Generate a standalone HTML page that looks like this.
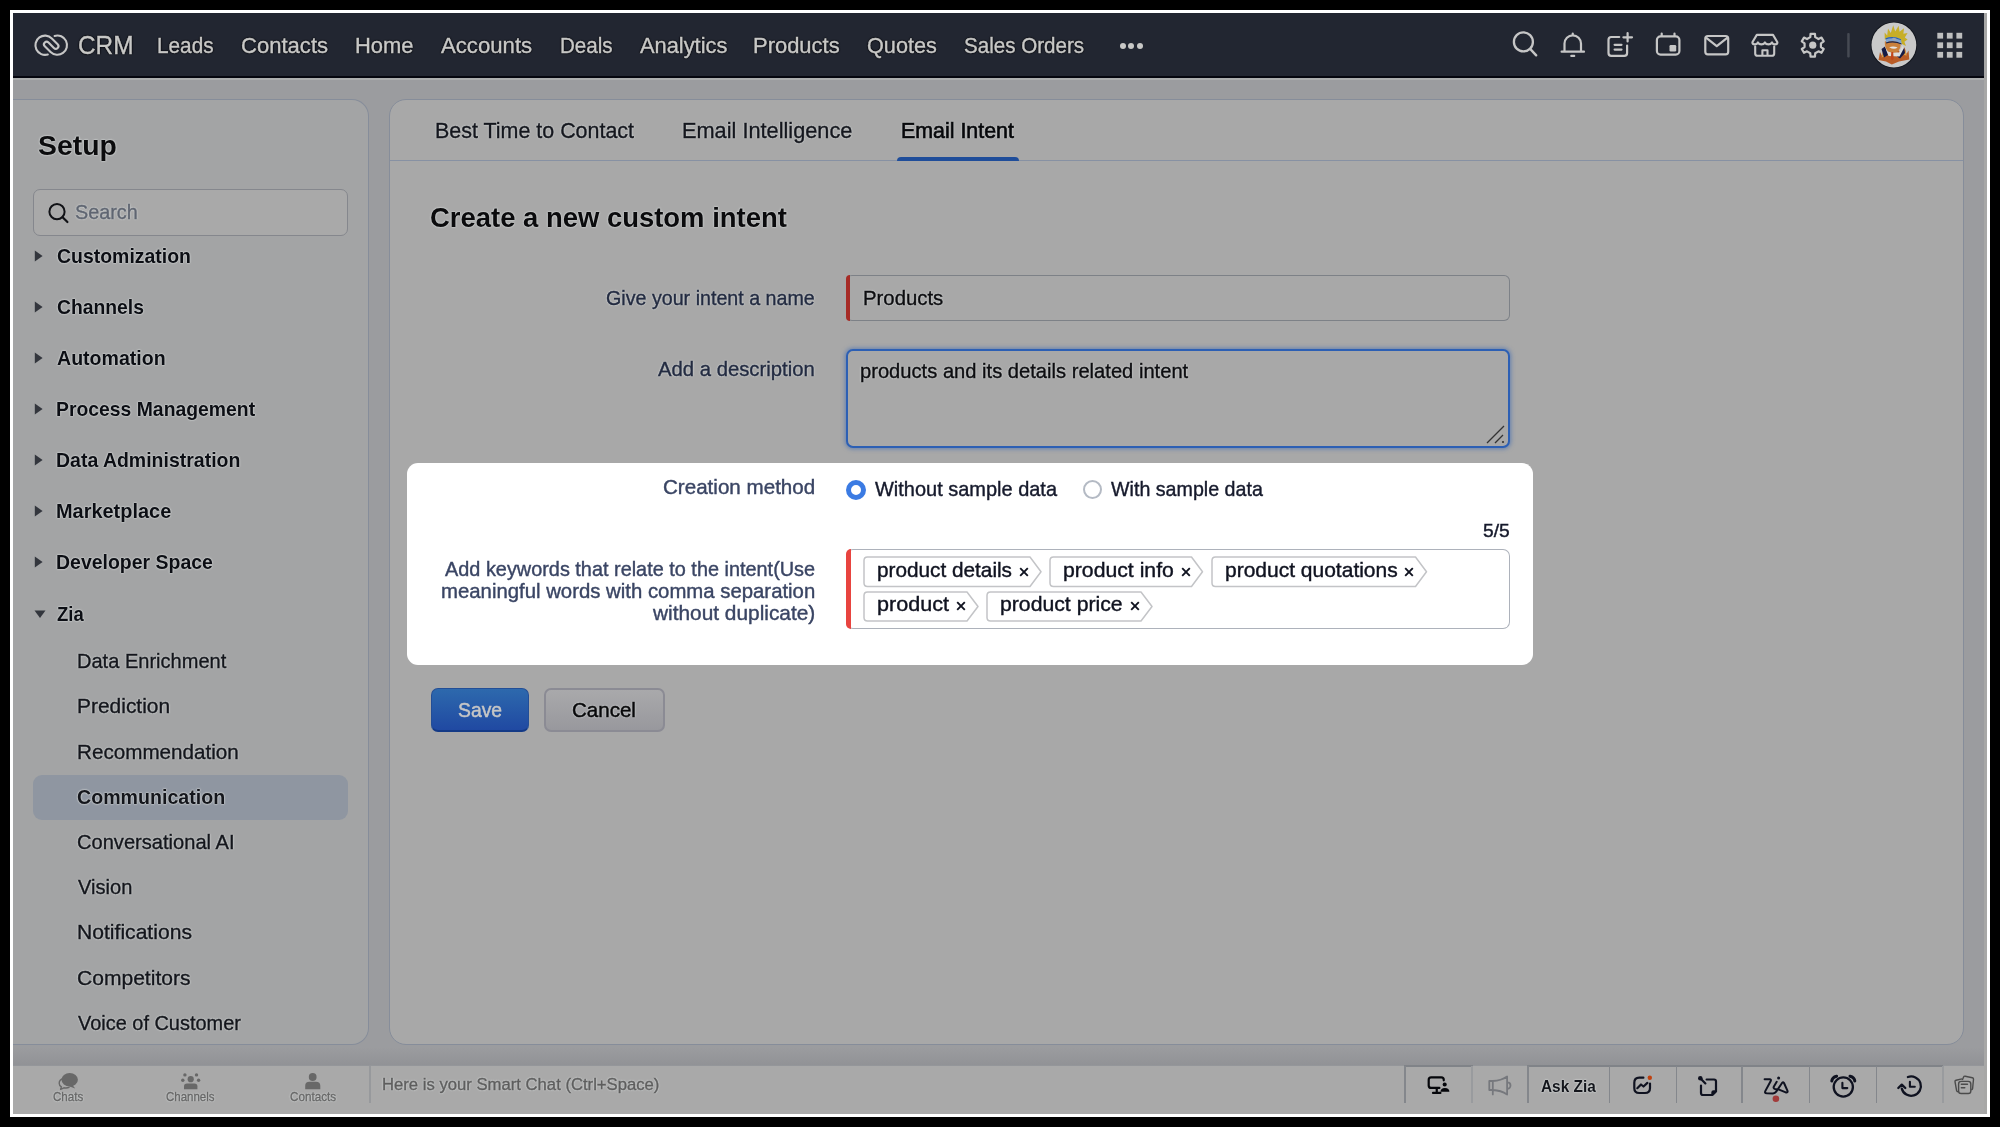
<!DOCTYPE html><html><head><meta charset="utf-8"><title>Zoho CRM - Email Intent</title><style>
html,body{margin:0;padding:0;}
body{width:2000px;height:1127px;background:#000;overflow:hidden;position:relative;font-family:"Liberation Sans",sans-serif;}
.a{position:absolute;box-sizing:border-box;}
.t{position:absolute;white-space:nowrap;line-height:1;transform-origin:0 0;display:block;}
svg{position:absolute;overflow:visible;}
</style></head><body>
<div class="a" style="left:10px;top:10px;width:1980px;height:1107px;background:#fff;"></div>
<div class="a" id="app" style="left:13px;top:13px;width:1974px;height:1101px;background:#9b9c9f;"></div>
<div class="a" style="left:1984px;top:13px;width:3px;height:1101px;background:#a7a7a6;"></div>
<nav class="a" style="left:13px;top:13px;width:1971px;height:65px;background:#222631;"></nav>
<div class="a" style="left:13px;top:76.4px;width:1971px;height:1.6px;background:#05060e;"></div>
<div class="a" style="left:13px;top:78px;width:1971px;height:2px;background:#acaeae;"></div>
<div class="a" style="left:1119.6px;top:43.4px;width:6px;height:6px;border-radius:50%;background:#c8c8c6;"></div>
<div class="a" style="left:1128.3px;top:43.4px;width:6px;height:6px;border-radius:50%;background:#c8c8c6;"></div>
<div class="a" style="left:1136.9px;top:43.4px;width:6px;height:6px;border-radius:50%;background:#c8c8c6;"></div>
<aside class="a" style="left:13px;top:98.5px;width:356px;height:946.5px;background:#a3a4a5;border:1.7px solid #868d9a;border-left:none;border-radius:0 17px 17px 0;"></aside>
<div class="a" style="left:33px;top:189px;width:314.5px;height:46.5px;border:1.5px solid #85878d;border-radius:7px;background:#a9a9a9;"></div>
<svg style="left:45px;top:200px" width="26" height="26" viewBox="0 0 26 26"><circle cx="12" cy="11.7" r="7.6" fill="none" stroke="#111216" stroke-width="2"/><path d="M17.6 17.2 L22.4 22" stroke="#111216" stroke-width="2.2" stroke-linecap="round"/></svg>
<svg style="left:33px;top:249.2px" width="12" height="14" viewBox="0 0 12 14"><path d="M1.8 1.6 L9.6 7 L1.8 12.4 Z" fill="#33363d"/></svg>
<svg style="left:33px;top:300.2px" width="12" height="14" viewBox="0 0 12 14"><path d="M1.8 1.6 L9.6 7 L1.8 12.4 Z" fill="#33363d"/></svg>
<svg style="left:33px;top:351.2px" width="12" height="14" viewBox="0 0 12 14"><path d="M1.8 1.6 L9.6 7 L1.8 12.4 Z" fill="#33363d"/></svg>
<svg style="left:33px;top:402.2px" width="12" height="14" viewBox="0 0 12 14"><path d="M1.8 1.6 L9.6 7 L1.8 12.4 Z" fill="#33363d"/></svg>
<svg style="left:33px;top:453.2px" width="12" height="14" viewBox="0 0 12 14"><path d="M1.8 1.6 L9.6 7 L1.8 12.4 Z" fill="#33363d"/></svg>
<svg style="left:33px;top:504.19999999999993px" width="12" height="14" viewBox="0 0 12 14"><path d="M1.8 1.6 L9.6 7 L1.8 12.4 Z" fill="#33363d"/></svg>
<svg style="left:33px;top:555.1999999999999px" width="12" height="14" viewBox="0 0 12 14"><path d="M1.8 1.6 L9.6 7 L1.8 12.4 Z" fill="#33363d"/></svg>
<svg style="left:33px;top:607.5999999999999px" width="14" height="12" viewBox="0 0 14 12"><path d="M1.5 2.5 L12.5 2.5 L7 10 Z" fill="#33363d"/></svg>
<div class="a" style="left:33px;top:774.5px;width:314.5px;height:45px;border-radius:9px;background:#8f96a1;"></div>
<main class="a" style="left:389px;top:98.5px;width:1575px;height:946.5px;background:#a8a8a8;border:1.7px solid #868d9a;border-radius:17px;"></main>
<div class="a" style="left:390px;top:159.6px;width:1573px;height:1.6px;background:#8791a3;"></div>
<div class="a" style="left:897.3px;top:156.6px;width:121.7px;height:4.6px;background:#1f4d9a;border-radius:5px 5px 0 0;"></div>
<div class="a" style="left:846px;top:275px;width:664px;height:45.5px;border:1.5px solid #7d8187;border-left:none;border-radius:6px;background:#a8a8a8;"></div>
<div class="a" style="left:845.9px;top:275px;width:4.5px;height:45.5px;background:#a62b26;border-radius:6px 0 0 6px;"></div>
<div class="a" style="left:846px;top:348.5px;width:664px;height:99.5px;border:2px solid #2c5fb4;border-radius:7px;background:#a8a8a8;box-shadow:0 0 4px 1px rgba(44,95,180,.55);"></div>
<svg style="left:1484px;top:424px" width="22" height="20" viewBox="0 0 22 20"><path d="M3 19 L20 2 M11 19 L19 11" stroke="#333" stroke-width="1.3" fill="none"/><circle cx="19" cy="18" r="1.1" fill="#333"/></svg>
<section class="a" style="left:406.5px;top:463px;width:1126px;height:201.5px;background:#fff;border-radius:11px;"></section>
<div class="a" style="left:846.2px;top:479.6px;width:20px;height:20px;border-radius:50%;border:5.5px solid #3b7be3;background:#fff;"></div>
<div class="a" style="left:1083px;top:480.2px;width:19px;height:19px;border-radius:50%;border:2px solid #b4bac4;background:#fff;"></div>
<div class="a" style="left:846px;top:548.5px;width:664px;height:80.5px;border:1.5px solid #adb2bb;border-left:none;border-radius:7px;background:#fff;"></div>
<div class="a" style="left:846px;top:548.5px;width:5px;height:80.5px;background:#e8443f;border-radius:7px 0 0 7px;"></div>
<svg style="left:863px;top:556px" width="181" height="31.5" viewBox="-1 -1 181 31.5"><path d="M3.5 0 H166 L177 14.75 L166 29.5 H3.5 Q0 29.5 0 26.0 V3.5 Q0 0 3.5 0 Z" fill="#fff" stroke="#c3c4c7" stroke-width="1.5" stroke-linejoin="round"/></svg>
<svg style="left:1018.8px;top:567.0px" width="10" height="10" viewBox="0 0 10 10"><path d="M1.2 1.2 L8.8 8.8 M8.8 1.2 L1.2 8.8" stroke="#101320" stroke-width="1.9" fill="none"/></svg>
<svg style="left:1049px;top:556px" width="156.5" height="31.5" viewBox="-1 -1 156.5 31.5"><path d="M3.5 0 H141.5 L152.5 14.75 L141.5 29.5 H3.5 Q0 29.5 0 26.0 V3.5 Q0 0 3.5 0 Z" fill="#fff" stroke="#c3c4c7" stroke-width="1.5" stroke-linejoin="round"/></svg>
<svg style="left:1180.7px;top:567.0px" width="10" height="10" viewBox="0 0 10 10"><path d="M1.2 1.2 L8.8 8.8 M8.8 1.2 L1.2 8.8" stroke="#101320" stroke-width="1.9" fill="none"/></svg>
<svg style="left:1211px;top:556px" width="218.5" height="31.5" viewBox="-1 -1 218.5 31.5"><path d="M3.5 0 H203.5 L214.5 14.75 L203.5 29.5 H3.5 Q0 29.5 0 26.0 V3.5 Q0 0 3.5 0 Z" fill="#fff" stroke="#c3c4c7" stroke-width="1.5" stroke-linejoin="round"/></svg>
<svg style="left:1404.3px;top:567.0px" width="10" height="10" viewBox="0 0 10 10"><path d="M1.2 1.2 L8.8 8.8 M8.8 1.2 L1.2 8.8" stroke="#101320" stroke-width="1.9" fill="none"/></svg>
<svg style="left:863px;top:590.5px" width="118" height="31.0" viewBox="-1 -1 118 31.0"><path d="M3.5 0 H103 L114 14.5 L103 29.0 H3.5 Q0 29.0 0 25.5 V3.5 Q0 0 3.5 0 Z" fill="#fff" stroke="#c3c4c7" stroke-width="1.5" stroke-linejoin="round"/></svg>
<svg style="left:956.1px;top:601.4000000000001px" width="10" height="10" viewBox="0 0 10 10"><path d="M1.2 1.2 L8.8 8.8 M8.8 1.2 L1.2 8.8" stroke="#101320" stroke-width="1.9" fill="none"/></svg>
<svg style="left:986px;top:590.5px" width="169" height="31.0" viewBox="-1 -1 169 31.0"><path d="M3.5 0 H154 L165 14.5 L154 29.0 H3.5 Q0 29.0 0 25.5 V3.5 Q0 0 3.5 0 Z" fill="#fff" stroke="#c3c4c7" stroke-width="1.5" stroke-linejoin="round"/></svg>
<svg style="left:1130.1px;top:601.4000000000001px" width="10" height="10" viewBox="0 0 10 10"><path d="M1.2 1.2 L8.8 8.8 M8.8 1.2 L1.2 8.8" stroke="#101320" stroke-width="1.9" fill="none"/></svg>
<div class="a" style="left:431px;top:688px;width:98px;height:43.6px;border-radius:7px;background:linear-gradient(#2d69ad,#2049a2);border:1px solid #234e96;border-bottom:2.5px solid #143a86;"></div>
<div class="a" style="left:543.6px;top:688px;width:121px;height:43.6px;border-radius:7px;background:linear-gradient(#a9a9ab,#98989d);border:2px solid #8b8b94;"></div>
<div class="a" style="left:13px;top:1047px;width:1971px;height:18px;background:linear-gradient(rgba(0,0,0,0),rgba(20,22,30,.07));"></div>
<footer class="a" style="left:13px;top:1065px;width:1971px;height:49px;background:#a9a9a9;border-top:1.5px solid #94969a;"></footer><div class="a" style="left:1404px;top:1065.3px;width:68.8px;height:1.7px;background:#808388;"></div><div class="a" style="left:1527.2px;top:1065.3px;width:416px;height:1.7px;background:#808388;"></div>
<svg style="left:0;top:0" width="2000" height="1127" viewBox="0 0 2000 1127" fill="none" ><path d="M47.80 54.50 A9.65 9.65 0 1 1 51.82 38.38 L57.64 44.14 A2.65 2.65 0 0 1 53.89 47.89 L48.51 42.51 A2.65 2.65 0 0 0 44.76 46.26 L50.58 52.02 A9.65 9.65 0 1 0 54.60 35.90" stroke="#c6c6c6" stroke-width="2.1" stroke-linecap="round" stroke-linejoin="round"/><circle cx="1523.4" cy="41.9" r="9.5" stroke="#c6c6c6" stroke-width="2.3"/><path d="M1530.4 49.2 L1536.2 55.3" stroke="#c6c6c6" stroke-width="2.4" stroke-linecap="round"/><path d="M1564.5 51.7 V43.6 A8.25 8.25 0 0 1 1581 43.6 V51.7 M1561.6 51.7 H1584 M1572.75 33.5 V35.3 M1571.3 55.9 H1574.2" stroke="#c6c6c6" stroke-width="2.2" stroke-linecap="round"/><path d="M1619.2 37 H1611.3 Q1608.5 37 1608.5 39.8 V53 Q1608.5 55.8 1611.3 55.8 H1624.3 Q1627.1 55.8 1627.1 53 V45.6 M1614.6 44.8 H1621.5 M1614.6 49.6 H1621.5 M1623.4 37.3 H1632 M1627.6 33 V41.5" stroke="#c6c6c6" stroke-width="2.2" stroke-linecap="round"/><rect x="1656.9" y="36.4" width="22.5" height="18.2" rx="3.6" stroke="#c6c6c6" stroke-width="2.2"/><path d="M1661.7 33.6 V36 M1674.5 33.6 V36" stroke="#c6c6c6" stroke-width="2.2" stroke-linecap="round"/><rect x="1669.5" y="45" width="6.7" height="6.5" rx="1.2" fill="#c6c6c6"/><rect x="1705.3" y="36" width="22.9" height="18.3" rx="2.6" stroke="#c6c6c6" stroke-width="2.2"/><path d="M1706 37.6 L1716.75 46.2 L1727.5 37.6" stroke="#c6c6c6" stroke-width="2.2" stroke-linejoin="round"/><path d="M1756.8 34.9 H1773 L1777.4 42.2 Q1777.4 44.4 1775 44.4 Q1772.6 44.4 1771.9 42.4 Q1770.8 44.4 1768.4 44.4 Q1766 44.4 1764.9 42.4 Q1763.8 44.4 1761.4 44.4 Q1759 44.4 1757.9 42.4 Q1757.2 44.4 1754.8 44.4 Q1752.4 44.4 1752.4 42.2 Z" stroke="#c6c6c6" stroke-width="2.1" stroke-linejoin="round"/><path d="M1755.2 46.5 V53.4 Q1755.2 55.8 1757.6 55.8 H1771.8 Q1774.2 55.8 1774.2 53.4 V46.5 M1762.4 55.5 V50.2 H1767.5 V55.5" stroke="#c6c6c6" stroke-width="2.1" stroke-linecap="round" stroke-linejoin="round"/><path d="M1815.21 37.17 L1814.96 33.81 L1810.54 33.81 L1810.29 37.17 L1807.02 39.06 L1804.00 37.59 L1801.78 41.42 L1804.57 43.31 L1804.57 47.09 L1801.78 48.98 L1804.00 52.81 L1807.02 51.34 L1810.29 53.23 L1810.54 56.59 L1814.96 56.59 L1815.21 53.23 L1818.48 51.34 L1821.50 52.81 L1823.72 48.98 L1820.93 47.09 L1820.93 43.31 L1823.72 41.42 L1821.50 37.59 L1818.48 39.06 Z" stroke="#c6c6c6" stroke-width="2.2" stroke-linejoin="round"/><circle cx="1812.75" cy="45.2" r="3.6" fill="#c6c6c6"/><rect x="1847.2" y="33" width="2.5" height="24.5" rx="1" fill="#464a53"/><rect x="1937.3" y="32.8" width="5.8" height="5.8" fill="#bebebe"/><rect x="1937.3" y="42.35" width="5.8" height="5.8" fill="#bebebe"/><rect x="1937.3" y="51.9" width="5.8" height="5.8" fill="#bebebe"/><rect x="1946.85" y="32.8" width="5.8" height="5.8" fill="#bebebe"/><rect x="1946.85" y="42.35" width="5.8" height="5.8" fill="#bebebe"/><rect x="1946.85" y="51.9" width="5.8" height="5.8" fill="#bebebe"/><rect x="1956.4" y="32.8" width="5.8" height="5.8" fill="#bebebe"/><rect x="1956.4" y="42.35" width="5.8" height="5.8" fill="#bebebe"/><rect x="1956.4" y="51.9" width="5.8" height="5.8" fill="#bebebe"/></svg>
<svg style="left:0;top:0" width="2000" height="1127" viewBox="0 0 2000 1127" fill="none" ><defs><clipPath id="avc"><circle cx="1893.9" cy="45" r="22.4"/></clipPath></defs><circle cx="1893.9" cy="45" r="23.299999999999997" fill="#11141c"/><circle cx="1893.9" cy="45" r="22.4" fill="#c9c9c9"/><g clip-path="url(#avc)"><path d="M1878.5 60 L1880 52 L1882 56 L1883.5 48.5 L1886 54 L1890 50 L1898 50 L1902.5 54 L1904.5 47 L1906.5 54 L1908.5 50.5 L1909.3 59.5 L1899 61.5 L1891.8 64.4 L1886 61.5 Z" fill="#b95c26"/><path d="M1881.5 57.5 L1883.5 51 L1885.5 56 Z M1904 55 L1905 49.5 L1906.8 55.5 Z" fill="#d9a24a"/><path d="M1881.5 49 L1885 46.5 L1888 55 L1884 57.5 Z M1897 56.5 L1901.5 50 L1904 47.5 L1905 53 L1900 58.5 Z" fill="#161b45"/><path d="M1885 46 L1888 44 L1890 52 L1899 52.5 L1902.5 46 L1904 48 L1899.5 56.5 L1888.5 56 Z" fill="#dcdcdc"/><path d="M1884.8 41.5 Q1892 38.5 1900.5 43.8 Q1901.3 49 1897 52 Q1892 53.5 1888 51.5 Q1884.3 47.5 1884.8 41.5 Z" fill="#c9803c"/><path d="M1889.2 47.2 Q1893.5 45.6 1897.6 47.6 Q1894 50.2 1889.2 47.2 Z" fill="#e6e6e6"/><path d="M1891.3 52 L1893.2 52 L1893.6 59 L1892 60.5 L1890.8 58.5 Z" fill="#c2451a"/><path d="M1884.8 39.5 L1884.6 32.5 L1887.2 35.5 L1888 28.5 L1890.8 33 L1893.2 25.3 L1895.2 31.5 L1898.6 25.8 L1899.6 31.8 L1904 28.2 L1903.4 33.8 L1907.6 33 L1904.8 37.6 L1907.6 39.4 L1904.4 41.8 L1906 46 L1902 44 L1900 40 L1892 37.5 Z" fill="#c7ae27"/><path d="M1885.6 38.2 Q1893 35.2 1901 39.2 L1901.6 43.6 Q1893.5 39.6 1886 42.6 Z" fill="#7fa3cf"/><path d="M1885.6 38.2 Q1893 35.2 1901 39.2 L1901.1 40.2 Q1893 36.6 1885.7 39.4 Z" fill="#2d5fae"/><path d="M1886 42.6 Q1893.5 39.6 1901.6 43.6 L1901.7 44.6 Q1893.5 40.8 1886.1 43.6 Z" fill="#1a2247"/><ellipse cx="1894.3" cy="39.2" rx="2.2" ry="1.3" fill="#9aa6b8" transform="rotate(8 1894.3 39.2)"/></g></svg><svg style="left:0;top:0" width="2000" height="1127" viewBox="0 0 2000 1127" fill="none"><path d="M63.5 1078.5 Q59.2 1079.5 59.2 1083.2 Q59.2 1085.6 61.4 1086.9 L60.6 1089.3 L63.9 1087.8 Q67 1088.4 69.5 1087.2" stroke="#686868" stroke-width="1.4" stroke-linejoin="round"/><ellipse cx="69.7" cy="1079.8" rx="8.2" ry="6.7" fill="#686868"/><path d="M72.5 1085 L75.2 1088.6 L69 1086.3 Z" fill="#686868"/><circle cx="190.7" cy="1079.2" r="3.1" fill="#686868"/><path d="M184 1089.2 V1086.2 Q184 1083.4 187 1083.4 H194.4 Q197.4 1083.4 197.4 1086.2 V1089.2 Z" fill="#686868"/><circle cx="184.9" cy="1074.9" r="1.7" fill="#686868"/><circle cx="196.5" cy="1074.9" r="1.7" fill="#686868"/><circle cx="182.8" cy="1080.2" r="1.7" fill="#686868"/><circle cx="198.6" cy="1080.2" r="1.7" fill="#686868"/><circle cx="312.7" cy="1077" r="3.9" fill="#686868"/><path d="M305.2 1089.2 V1086 Q305.2 1081.8 309.4 1081.8 H316 Q320.3 1081.8 320.3 1086 V1089.2 Z" fill="#686868"/></svg>
<svg style="left:0;top:0" width="2000" height="1127" viewBox="0 0 2000 1127" fill="none"><path d="M1443.75 1080.3 V1079.8 Q1443.75 1077.3 1441.25 1077.3 H1431.2 Q1428.7 1077.3 1428.7 1079.8 V1085.4 Q1428.7 1087.9 1431.2 1087.9 H1439.4 M1436.75 1088 V1092.6 M1433 1092.9 H1440.4" stroke="#05060a" stroke-width="2.2" stroke-linecap="round"/><circle cx="1444.7" cy="1084.5" r="2.05" fill="#05060a"/><path d="M1440.5 1091.8 Q1440.5 1087.9 1444.9 1087.9 Q1449.4 1087.9 1449.4 1091.8 Z" fill="#05060a"/><path d="M1489.3 1081 H1492.8 V1090 H1489.3 Z M1492.8 1081 Q1501 1080.6 1507.1 1076.4 V1094.5 Q1501 1090.4 1492.8 1090 M1492.8 1090 V1094.4 M1507.3 1082.3 A3.2 3.2 0 0 1 1507.3 1088.7" stroke="#76787d" stroke-width="1.8" stroke-linejoin="round" stroke-linecap="round"/><path d="M1643.4 1077.7 H1639.3 Q1634.3 1077.7 1634.3 1082.7 V1088 Q1634.3 1093 1639.3 1093 H1645 Q1650 1093 1650 1088 V1083.6 M1637.3 1088.2 L1641 1084.5 L1643.5 1086.5 L1647.4 1082.9" stroke="#0f1220" stroke-width="2.2" stroke-linecap="round" stroke-linejoin="round"/><circle cx="1649.8" cy="1077.8" r="2.2" fill="#c0410f"/><circle cx="1700.3" cy="1078.2" r="2.3" fill="#0f1220"/><path d="M1700.3 1078.2 L1705.4 1083.4 M1706.6 1079.5 H1714 Q1716 1079.5 1716 1081.5 V1091.4 L1712.4 1095 H1703 Q1701 1095 1701 1093 V1085.6 M1716 1091.4 H1713.6 Q1712.4 1091.4 1712.4 1092.6 V1095" stroke="#0f1220" stroke-width="2.2" stroke-linecap="round" stroke-linejoin="round"/><path d="M1764.6 1079.3 H1769.6 Q1771.6 1079.3 1770.6 1081.2 L1765.4 1090.9 Q1764.2 1093.2 1766.8 1093.3 L1773 1093.4 Q1775 1093.3 1776.2 1091.6 L1782.2 1082.8 Q1783.2 1081.4 1784 1083 L1787.4 1090.6 Q1788.2 1092.9 1785.8 1092.4 L1778.4 1089.3 M1776.7 1081.8 L1773.9 1086.4 Q1773 1088.2 1774.8 1088.9 L1777.4 1089.4" stroke="#0f1220" stroke-width="2" stroke-linecap="round" stroke-linejoin="round"/><circle cx="1778.6" cy="1078" r="1.5" fill="#0f1220"/><circle cx="1775.9" cy="1098.8" r="3.3" fill="#a23b3a"/><circle cx="1843.3" cy="1087" r="9.6" stroke="#0f1220" stroke-width="2.3"/><path d="M1842.4 1082.7 V1088.1 H1847.3" stroke="#0f1220" stroke-width="2.1" stroke-linecap="round" stroke-linejoin="round"/><path d="M1836.6 1076.2 Q1832.2 1077.2 1831.8 1081" stroke="#0f1220" stroke-width="3" stroke-linecap="round"/><path d="M1850 1076.2 Q1854.4 1077.2 1854.8 1081" stroke="#0f1220" stroke-width="3" stroke-linecap="round"/><path d="M1907.9 1077 A9.7 9.7 0 1 1 1901.8 1088.6" stroke="#0f1220" stroke-width="2.3" stroke-linecap="round"/><path d="M1898.3 1088 L1901.8 1084.6 L1905.3 1088" stroke="#0f1220" stroke-width="2.3" stroke-linecap="round" stroke-linejoin="round"/><path d="M1909.9 1081.8 V1086.8 H1914.8" stroke="#0f1220" stroke-width="2.1" stroke-linecap="round" stroke-linejoin="round"/><g stroke="#4b4b4b" stroke-width="1.4" stroke-linejoin="round"><path d="M1962 1078.9 L1956 1080.2 Q1954.8 1080.5 1955 1081.7 L1956.6 1090.6 Q1956.9 1091.8 1958.2 1091.7" /><path d="M1962.3 1080 L1963.6 1076.9 Q1964 1076 1965.2 1076.2 L1972.4 1077.7 Q1973.6 1078 1973.5 1079.2 L1972.6 1088.5 Q1972.4 1089.6 1971.2 1089.8"/><rect x="1958.6" y="1081.4" width="12.2" height="12.1" rx="2.6" fill="#a9a9a9"/><path d="M1961.3 1084.2 H1967.5 M1961.3 1087.8 H1964.8" stroke-linecap="round"/></g></svg>
<div class="a" style="left:369px;top:1066px;width:1.5px;height:37px;background:#97999c;"></div>
<div class="a" style="left:1404.0px;top:1066px;width:1.6px;height:37.3px;background:#84878c;"></div>
<div class="a" style="left:1471.2px;top:1066px;width:1.6px;height:37.3px;background:#999b9e;"></div>
<div class="a" style="left:1527.2px;top:1066px;width:1.6px;height:37.3px;background:#84878c;"></div>
<div class="a" style="left:1608.5px;top:1066px;width:1.6px;height:37.3px;background:#84878c;"></div>
<div class="a" style="left:1675.7px;top:1066px;width:1.6px;height:37.3px;background:#84878c;"></div>
<div class="a" style="left:1741.2px;top:1066px;width:1.6px;height:37.3px;background:#84878c;"></div>
<div class="a" style="left:1808.5px;top:1066px;width:1.6px;height:37.3px;background:#84878c;"></div>
<div class="a" style="left:1875.7px;top:1066px;width:1.6px;height:37.3px;background:#84878c;"></div>
<div class="a" style="left:1942.4px;top:1066px;width:1.6px;height:37.3px;background:#999b9e;"></div>
<div id="txt" class="a" style="left:0;top:0;width:2000px;height:1127px;will-change:transform;">
<span class="t" style="left:77.88px;top:33.00px;font-size:25.5px;color:#c8c8c6;transform:scaleX(0.9566);-webkit-text-stroke:0.4px #c8c8c6;text-shadow:0 0 2px rgba(2,3,10,1),0 0 2px rgba(2,3,10,1),0 0 1.2px rgba(2,3,10,.9);">CRM</span>
<span class="t" style="left:157.06px;top:35.00px;font-size:22.3px;color:#c8c8c6;transform:scaleX(0.9314);-webkit-text-stroke:0.4px #c8c8c6;text-shadow:0 0 2px rgba(2,3,10,1),0 0 2px rgba(2,3,10,1),0 0 1.2px rgba(2,3,10,.9);">Leads</span>
<span class="t" style="left:241.22px;top:35.00px;font-size:22.3px;color:#c8c8c6;transform:scaleX(0.9893);-webkit-text-stroke:0.4px #c8c8c6;text-shadow:0 0 2px rgba(2,3,10,1),0 0 2px rgba(2,3,10,1),0 0 1.2px rgba(2,3,10,.9);">Contacts</span>
<span class="t" style="left:355.05px;top:35.00px;font-size:22.3px;color:#c8c8c6;transform:scaleX(0.9841);-webkit-text-stroke:0.4px #c8c8c6;text-shadow:0 0 2px rgba(2,3,10,1),0 0 2px rgba(2,3,10,1),0 0 1.2px rgba(2,3,10,.9);">Home</span>
<span class="t" style="left:441.21px;top:35.00px;font-size:22.3px;color:#c8c8c6;transform:scaleX(0.9935);-webkit-text-stroke:0.4px #c8c8c6;text-shadow:0 0 2px rgba(2,3,10,1),0 0 2px rgba(2,3,10,1),0 0 1.2px rgba(2,3,10,.9);">Accounts</span>
<span class="t" style="left:559.60px;top:35.00px;font-size:22.3px;color:#c8c8c6;transform:scaleX(0.9236);-webkit-text-stroke:0.4px #c8c8c6;text-shadow:0 0 2px rgba(2,3,10,1),0 0 2px rgba(2,3,10,1),0 0 1.2px rgba(2,3,10,.9);">Deals</span>
<span class="t" style="left:639.60px;top:35.00px;font-size:22.3px;color:#c8c8c6;transform:scaleX(0.9788);-webkit-text-stroke:0.4px #c8c8c6;text-shadow:0 0 2px rgba(2,3,10,1),0 0 2px rgba(2,3,10,1),0 0 1.2px rgba(2,3,10,.9);">Analytics</span>
<span class="t" style="left:753.03px;top:35.00px;font-size:22.3px;color:#c8c8c6;transform:scaleX(0.9843);-webkit-text-stroke:0.4px #c8c8c6;text-shadow:0 0 2px rgba(2,3,10,1),0 0 2px rgba(2,3,10,1),0 0 1.2px rgba(2,3,10,.9);">Products</span>
<span class="t" style="left:866.65px;top:35.00px;font-size:22.3px;color:#c8c8c6;transform:scaleX(0.9712);-webkit-text-stroke:0.4px #c8c8c6;text-shadow:0 0 2px rgba(2,3,10,1),0 0 2px rgba(2,3,10,1),0 0 1.2px rgba(2,3,10,.9);">Quotes</span>
<span class="t" style="left:964.34px;top:35.00px;font-size:22.3px;color:#c8c8c6;transform:scaleX(0.9230);-webkit-text-stroke:0.4px #c8c8c6;text-shadow:0 0 2px rgba(2,3,10,1),0 0 2px rgba(2,3,10,1),0 0 1.2px rgba(2,3,10,.9);">Sales Orders</span>
<span class="t" style="left:38.17px;top:132.00px;font-size:28px;color:#0c0c0e;transform:scaleX(1.0129);font-weight:bold;text-shadow:0 0 2px rgba(206,209,209,1),0 0 2px rgba(206,209,209,1),0 0 1.2px rgba(206,209,209,.9);">Setup</span>
<span class="t" style="left:74.61px;top:202.00px;font-size:20.6px;color:#5f6571;transform:scaleX(0.9625);-webkit-text-stroke:0.4px #5f6571;text-shadow:0 0 2px rgba(206,209,209,1),0 0 2px rgba(206,209,209,1),0 0 1.2px rgba(206,209,209,.9);">Search</span>
<span class="t" style="left:56.77px;top:245.00px;font-size:21px;color:#0c0e14;transform:scaleX(0.9261);font-weight:bold;text-shadow:0 0 2px rgba(206,209,209,1),0 0 2px rgba(206,209,209,1),0 0 1.2px rgba(206,209,209,.9);">Customization</span>
<span class="t" style="left:56.78px;top:296.00px;font-size:21px;color:#0c0e14;transform:scaleX(0.9201);font-weight:bold;text-shadow:0 0 2px rgba(206,209,209,1),0 0 2px rgba(206,209,209,1),0 0 1.2px rgba(206,209,209,.9);">Channels</span>
<span class="t" style="left:57.01px;top:347.00px;font-size:21px;color:#0c0e14;transform:scaleX(0.9317);font-weight:bold;text-shadow:0 0 2px rgba(206,209,209,1),0 0 2px rgba(206,209,209,1),0 0 1.2px rgba(206,209,209,.9);">Automation</span>
<span class="t" style="left:56.17px;top:398.00px;font-size:21px;color:#0c0e14;transform:scaleX(0.9220);font-weight:bold;text-shadow:0 0 2px rgba(206,209,209,1),0 0 2px rgba(206,209,209,1),0 0 1.2px rgba(206,209,209,.9);">Process Management</span>
<span class="t" style="left:56.16px;top:449.00px;font-size:21px;color:#0c0e14;transform:scaleX(0.9275);font-weight:bold;text-shadow:0 0 2px rgba(206,209,209,1),0 0 2px rgba(206,209,209,1),0 0 1.2px rgba(206,209,209,.9);">Data Administration</span>
<span class="t" style="left:56.13px;top:500.00px;font-size:21px;color:#0c0e14;transform:scaleX(0.9492);font-weight:bold;text-shadow:0 0 2px rgba(206,209,209,1),0 0 2px rgba(206,209,209,1),0 0 1.2px rgba(206,209,209,.9);">Marketplace</span>
<span class="t" style="left:56.16px;top:551.00px;font-size:21px;color:#0c0e14;transform:scaleX(0.9270);font-weight:bold;text-shadow:0 0 2px rgba(206,209,209,1),0 0 2px rgba(206,209,209,1),0 0 1.2px rgba(206,209,209,.9);">Developer Space</span>
<span class="t" style="left:56.92px;top:603.00px;font-size:21px;color:#0c0e14;transform:scaleX(0.8811);font-weight:bold;text-shadow:0 0 2px rgba(206,209,209,1),0 0 2px rgba(206,209,209,1),0 0 1.2px rgba(206,209,209,.9);">Zia</span>
<span class="t" style="left:76.62px;top:651.00px;font-size:20.6px;color:#14161c;transform:scaleX(0.9731);-webkit-text-stroke:0.4px #14161c;text-shadow:0 0 2px rgba(206,209,209,1),0 0 2px rgba(206,209,209,1),0 0 1.2px rgba(206,209,209,.9);">Data Enrichment</span>
<span class="t" style="left:76.96px;top:696.00px;font-size:20.6px;color:#14161c;transform:scaleX(1.0169);-webkit-text-stroke:0.4px #14161c;text-shadow:0 0 2px rgba(206,209,209,1),0 0 2px rgba(206,209,209,1),0 0 1.2px rgba(206,209,209,.9);">Prediction</span>
<span class="t" style="left:76.57px;top:742.00px;font-size:20.6px;color:#14161c;transform:scaleX(1.0026);-webkit-text-stroke:0.4px #14161c;text-shadow:0 0 2px rgba(206,209,209,1),0 0 2px rgba(206,209,209,1),0 0 1.2px rgba(206,209,209,.9);">Recommendation</span>
<span class="t" style="left:77.16px;top:787.00px;font-size:20.6px;color:#14161c;transform:scaleX(0.9522);font-weight:bold;text-shadow:0 0 2px rgba(206,209,209,1),0 0 2px rgba(206,209,209,1),0 0 1.2px rgba(206,209,209,.9);">Communication</span>
<span class="t" style="left:77.09px;top:832.00px;font-size:20.6px;color:#14161c;transform:scaleX(0.9756);-webkit-text-stroke:0.4px #14161c;text-shadow:0 0 2px rgba(206,209,209,1),0 0 2px rgba(206,209,209,1),0 0 1.2px rgba(206,209,209,.9);">Conversational AI</span>
<span class="t" style="left:78.12px;top:877.00px;font-size:20.6px;color:#14161c;transform:scaleX(0.9755);-webkit-text-stroke:0.4px #14161c;text-shadow:0 0 2px rgba(206,209,209,1),0 0 2px rgba(206,209,209,1),0 0 1.2px rgba(206,209,209,.9);">Vision</span>
<span class="t" style="left:76.93px;top:922.00px;font-size:20.6px;color:#14161c;transform:scaleX(1.0248);-webkit-text-stroke:0.4px #14161c;text-shadow:0 0 2px rgba(206,209,209,1),0 0 2px rgba(206,209,209,1),0 0 1.2px rgba(206,209,209,.9);">Notifications</span>
<span class="t" style="left:77.49px;top:968.00px;font-size:20.6px;color:#14161c;transform:scaleX(1.0223);-webkit-text-stroke:0.4px #14161c;text-shadow:0 0 2px rgba(206,209,209,1),0 0 2px rgba(206,209,209,1),0 0 1.2px rgba(206,209,209,.9);">Competitors</span>
<span class="t" style="left:78.13px;top:1013.00px;font-size:20.6px;color:#14161c;transform:scaleX(0.9679);-webkit-text-stroke:0.4px #14161c;text-shadow:0 0 2px rgba(206,209,209,1),0 0 2px rgba(206,209,209,1),0 0 1.2px rgba(206,209,209,.9);">Voice of Customer</span>
<span class="t" style="left:434.55px;top:120.00px;font-size:22.6px;color:#15171e;transform:scaleX(0.9491);-webkit-text-stroke:0.4px #15171e;text-shadow:0 0 2px rgba(206,209,209,1),0 0 2px rgba(206,209,209,1),0 0 1.2px rgba(206,209,209,.9);">Best Time to Contact</span>
<span class="t" style="left:681.73px;top:120.00px;font-size:22.6px;color:#15171e;transform:scaleX(0.9623);-webkit-text-stroke:0.4px #15171e;text-shadow:0 0 2px rgba(206,209,209,1),0 0 2px rgba(206,209,209,1),0 0 1.2px rgba(206,209,209,.9);">Email Intelligence</span>
<span class="t" style="left:900.66px;top:120.00px;font-size:22.6px;color:#07080b;transform:scaleX(0.9461);-webkit-text-stroke:0.7px #07080b;text-shadow:0 0 2px rgba(206,209,209,1),0 0 2px rgba(206,209,209,1),0 0 1.2px rgba(206,209,209,.9);">Email Intent</span>
<span class="t" style="left:430.18px;top:204.00px;font-size:28px;color:#0b0b0d;transform:scaleX(0.9801);font-weight:bold;text-shadow:0 0 2px rgba(206,209,209,1),0 0 2px rgba(206,209,209,1),0 0 1.2px rgba(206,209,209,.9);">Create a new custom intent</span>
<span class="t" style="left:605.55px;top:288.00px;font-size:20.6px;color:#232b41;transform:scaleX(0.9550);-webkit-text-stroke:0.4px #232b41;text-shadow:0 0 2px rgba(206,209,209,1),0 0 2px rgba(206,209,209,1),0 0 1.2px rgba(206,209,209,.9);">Give your intent a name</span>
<span class="t" style="left:658.01px;top:359.00px;font-size:20.6px;color:#232b41;transform:scaleX(0.9851);-webkit-text-stroke:0.4px #232b41;text-shadow:0 0 2px rgba(206,209,209,1),0 0 2px rgba(206,209,209,1),0 0 1.2px rgba(206,209,209,.9);">Add a description</span>
<span class="t" style="left:862.94px;top:288.00px;font-size:20.6px;color:#0d0d10;transform:scaleX(0.9874);-webkit-text-stroke:0.4px #0d0d10;text-shadow:0 0 2px rgba(206,209,209,1),0 0 2px rgba(206,209,209,1),0 0 1.2px rgba(206,209,209,.9);">Products</span>
<span class="t" style="left:859.94px;top:361.00px;font-size:20.6px;color:#0d0d10;transform:scaleX(0.9785);-webkit-text-stroke:0.4px #0d0d10;text-shadow:0 0 2px rgba(206,209,209,1),0 0 2px rgba(206,209,209,1),0 0 1.2px rgba(206,209,209,.9);">products and its details related intent</span>
<span class="t" style="left:662.97px;top:477.00px;font-size:20.6px;color:#3a4564;transform:scaleX(1.0000);-webkit-text-stroke:0.4px #3a4564;">Creation method</span>
<span class="t" style="left:444.85px;top:559.00px;font-size:20.6px;color:#3a4564;transform:scaleX(0.9651);-webkit-text-stroke:0.4px #3a4564;">Add keywords that relate to the intent(Use</span>
<span class="t" style="left:440.80px;top:581.00px;font-size:20.6px;color:#3a4564;transform:scaleX(0.9878);-webkit-text-stroke:0.4px #3a4564;">meaningful words with comma separation</span>
<span class="t" style="left:653.00px;top:603.00px;font-size:20.6px;color:#3a4564;transform:scaleX(1.0125);-webkit-text-stroke:0.4px #3a4564;">without duplicate)</span>
<span class="t" style="left:874.88px;top:479.00px;font-size:20.6px;color:#161a2c;transform:scaleX(0.9695);-webkit-text-stroke:0.4px #161a2c;">Without sample data</span>
<span class="t" style="left:1110.88px;top:479.00px;font-size:20.6px;color:#161a2c;transform:scaleX(0.9543);-webkit-text-stroke:0.4px #161a2c;">With sample data</span>
<span class="t" style="left:1482.88px;top:522.00px;font-size:18px;color:#161a2c;transform:scaleX(1.0686);-webkit-text-stroke:0.4px #161a2c;">5/5</span>
<span class="t" style="left:876.54px;top:560.00px;font-size:20.6px;color:#101320;transform:scaleX(1.0078);-webkit-text-stroke:0.4px #101320;">product details</span>
<span class="t" style="left:1063.07px;top:560.00px;font-size:20.6px;color:#101320;transform:scaleX(1.0299);-webkit-text-stroke:0.4px #101320;">product info</span>
<span class="t" style="left:1225.09px;top:560.00px;font-size:20.6px;color:#101320;transform:scaleX(1.0193);-webkit-text-stroke:0.4px #101320;">product quotations</span>
<span class="t" style="left:876.96px;top:594.00px;font-size:20.6px;color:#101320;transform:scaleX(1.0475);-webkit-text-stroke:0.4px #101320;">product</span>
<span class="t" style="left:1000.05px;top:594.00px;font-size:20.6px;color:#101320;transform:scaleX(1.0299);-webkit-text-stroke:0.4px #101320;">product price</span>
<span class="t" style="left:457.75px;top:699.00px;font-size:21px;color:#c6c6c6;transform:scaleX(0.9204);-webkit-text-stroke:0.5px #c6c6c6;">Save</span>
<span class="t" style="left:572.13px;top:699.00px;font-size:21px;color:#08080a;transform:scaleX(0.9778);-webkit-text-stroke:0.5px #08080a;text-shadow:0 0 2px rgba(206,209,209,1),0 0 2px rgba(206,209,209,1),0 0 1.2px rgba(206,209,209,.9);">Cancel</span>
<span class="t" style="left:53.17px;top:1090.00px;font-size:13px;color:#676767;transform:scaleX(0.8911);-webkit-text-stroke:0.35px #676767;text-shadow:0 0 2px rgba(206,209,209,1),0 0 2px rgba(206,209,209,1),0 0 1.2px rgba(206,209,209,.9);">Chats</span>
<span class="t" style="left:166.18px;top:1090.00px;font-size:13px;color:#676767;transform:scaleX(0.8831);-webkit-text-stroke:0.35px #676767;text-shadow:0 0 2px rgba(206,209,209,1),0 0 2px rgba(206,209,209,1),0 0 1.2px rgba(206,209,209,.9);">Channels</span>
<span class="t" style="left:289.85px;top:1090.00px;font-size:13px;color:#676767;transform:scaleX(0.8987);-webkit-text-stroke:0.35px #676767;text-shadow:0 0 2px rgba(206,209,209,1),0 0 2px rgba(206,209,209,1),0 0 1.2px rgba(206,209,209,.9);">Contacts</span>
<span class="t" style="left:382.28px;top:1076.00px;font-size:17px;color:#5e5e5e;transform:scaleX(0.9804);-webkit-text-stroke:0.4px #5e5e5e;text-shadow:0 0 2px rgba(206,209,209,1),0 0 2px rgba(206,209,209,1),0 0 1.2px rgba(206,209,209,.9);">Here is your Smart Chat (Ctrl+Space)</span>
<span class="t" style="left:1540.99px;top:1079.00px;font-size:16.6px;color:#14161c;transform:scaleX(0.9271);font-weight:bold;text-shadow:0 0 2px rgba(206,209,209,1),0 0 2px rgba(206,209,209,1),0 0 1.2px rgba(206,209,209,.9);">Ask Zia</span>
</div>
</body></html>
